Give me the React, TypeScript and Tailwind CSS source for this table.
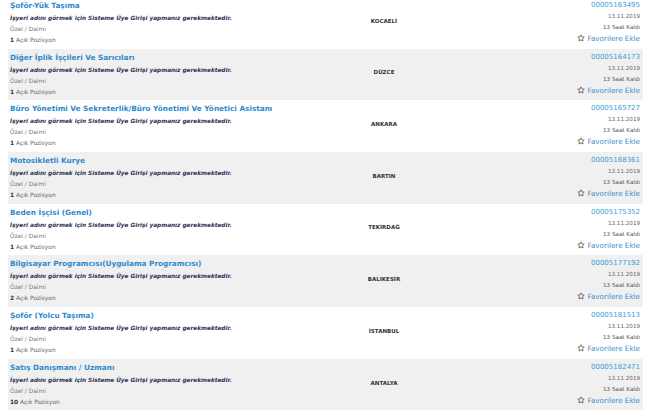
import React from "react";

type Job = { title: string; city: string; no: string; pos: number };

const jobs: Job[] = [
  { title: "Şoför-Yük Taşıma", city: "KOCAELİ", no: "00005163495", pos: 1 },
  { title: "Diğer İplik İşçileri Ve Sarıcıları", city: "DÜZCE", no: "00005164173", pos: 1 },
  { title: "Büro Yönetimi Ve Sekreterlik/Büro Yönetimi Ve Yönetici Asistanı", city: "ANKARA", no: "00005165727", pos: 1 },
  { title: "Motosikletli Kurye", city: "BARTIN", no: "00005168361", pos: 1 },
  { title: "Beden İşçisi (Genel)", city: "TEKİRDAĞ", no: "00005175352", pos: 1 },
  { title: "Bilgisayar Programcısı(Uygulama Programcısı)", city: "BALIKESİR", no: "00005177192", pos: 2 },
  { title: "Şoför (Yolcu Taşıma)", city: "İSTANBUL", no: "00005181513", pos: 1 },
  { title: "Satış Danışmanı / Uzmanı", city: "ANTALYA", no: "00005182471", pos: 10 },
];

function StarIcon() {
  return (
    <svg width="8" height="8" viewBox="0 0 24 24" fill="none" stroke="#555" strokeWidth="2.4" strokeLinejoin="round" className="inline-block mr-[2px] -mt-[1px]">
      <path d="M12 2.5l2.9 6.2 6.8.8-5 4.7 1.3 6.8L12 17.6 6 21l1.3-6.8-5-4.7 6.8-.8z" />
    </svg>
  );
}

export default function App() {
  return (
    <div className="w-[650px] h-[410px] overflow-hidden bg-white" style={{ fontFamily: '"DejaVu Sans", Verdana, sans-serif' }}>
      <div className="ml-[8px] mr-[7px] -mt-[3px]">
        {jobs.map((j, i) => (
          <div key={j.no} className={`flex h-[51.7px] ${i % 2 === 1 ? "bg-[#f0f0f0]" : "bg-white"}`}>
            <div className="w-[311px] pl-[2px] pt-[3px] flex flex-col">
              <div className="h-[12px] leading-[12px] text-[7.3px] font-bold text-[#2f8ace] whitespace-nowrap">{j.title}</div>
              <div className="h-[12px] leading-[12px] text-[5.75px] font-bold italic text-[#2b3350] whitespace-nowrap">
                İşyeri adını görmek için Sisteme Üye Girişi yapmanız gerekmektedir.
              </div>
              <div className="h-[11px] leading-[11px] text-[5.9px] text-[#777]">Özel / Daimi</div>
              <div className="h-[11px] leading-[11px] text-[5.9px] text-[#666]">
                <span className="font-bold text-[#333]">{j.pos}</span> Açık Pozisyon
              </div>
            </div>
            <div className="w-[130px] flex items-center justify-center pb-[4px]">
              <span className="text-[5.5px] font-bold text-[#333]">{j.city}</span>
            </div>
            <div className="flex-1 pr-[3px] pt-[3px] flex flex-col items-end">
              <div className="h-[11px] leading-[11px] text-[7px] text-[#3d9ad6]">{j.no}</div>
              <div className="h-[11px] leading-[11px] text-[5.6px] text-[#666]">13.11.2019</div>
              <div className="h-[11px] leading-[11px] text-[5.6px] text-[#555]">13 Saat Kaldı</div>
              <div className="h-[11px] leading-[11px] text-[7.2px] text-[#3a8fcd] flex items-center">
                <StarIcon />
                Favorilere Ekle
              </div>
            </div>
          </div>
        ))}
      </div>
    </div>
  );
}
